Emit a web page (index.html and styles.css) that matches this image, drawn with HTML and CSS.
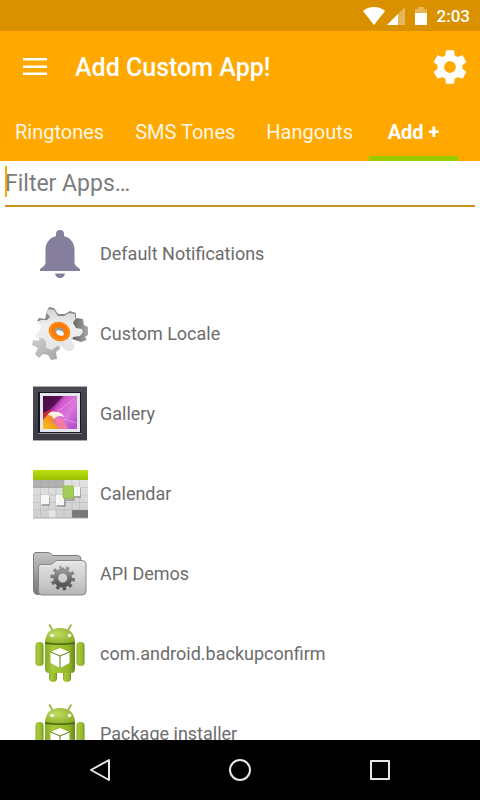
FILE: index.html
```html
<!DOCTYPE html>
<html lang="en">
<head>
    <meta charset="UTF-8">
    <meta name="viewport" content="width=device-width, initial-scale=1.0">
    <title>Add Custom App!</title>
    <link rel="stylesheet" href="styles.css">
</head>
<body>
    <div class="status-bar">
        <svg class="wifi" width="22" height="18" viewBox="0 0 22 18"><path fill="#fff" d="M11 18L0 4Q4.500 0 11 0T22 4Z"/></svg>
        <svg class="signal" width="18" height="18" viewBox="0 0 18 18"><path fill="#fff" opacity=".35" d="M18 0V18H0Z"/><path fill="#fff" d="M11 7V18H0Z"/></svg>
        <svg class="battery" width="12" height="18" viewBox="0 0 12 18"><path fill="#fff" opacity=".35" d="M3 0H9V2H12V6H0V2H3Z"/><path fill="#fff" d="M0 6H12V18H0Z"/></svg>
        <span class="clock">2:03</span>
    </div>
    <header class="toolbar">
        <button class="icon-button" aria-label="Menu">
            <svg width="32" height="32" viewBox="0 0 32 32"><path fill="#fff" d="M4 7H28V9.500H4ZM4 14.500H28V17H4ZM4 21.500H28V24H4Z"/></svg>
        </button>
        <h1>Add Custom App!</h1>
        <button class="icon-button" aria-label="Settings">
            <svg width="40" height="40" viewBox="0 0 24 24"><path fill="#fff" d="M19.430 12.980c.04-.32.07-.64.07-.98s-.03-.66-.07-.98l2.110-1.650c.19-.15.24-.42.12-.64l-2-3.460c-.12-.22-.39-.3-.61-.22l-2.490 1c-.52-.4-1.080-.73-1.690-.98l-.38-2.650C14.460 2.180 14.250 2 14 2h-4c-.25 0-.46.18-.49.42l-.38 2.650c-.61.25-1.170.59-1.690.98l-2.490-1c-.23-.09-.49 0-.61.22l-2 3.460c-.13.22-.07.49.12.64l2.110 1.650c-.04.32-.07.65-.07.98s.03.66.07.98l-2.110 1.650c-.19.15-.24.42-.12.64l2 3.460c.12.22.39.3.61.22l2.490-1c.52.4 1.080.73 1.690.98l.38 2.650c.03.24.24.42.49.42h4c.25 0 .46-.18.49-.42l.38-2.650c.61-.25 1.170-.59 1.690-.98l2.490 1c.23.09.49 0 .61-.22l2-3.460c.12-.22.07-.49-.12-.64l-2.110-1.650zM12 15.500c-1.930 0-3.500-1.570-3.500-3.500s1.570-3.500 3.500-3.500 3.500 1.570 3.500 3.500-1.570 3.500-3.500 3.500z"/></svg>
        </button>
    </header>
    <nav class="tabs">
        <a href="#ringtones">Ringtones</a>
        <a href="#sms">SMS Tones</a>
        <a href="#hangouts">Hangouts</a>
        <a href="#add" class="active">Add +</a>
    </nav>
    <main>
        <div class="filter">
            <input type="text" id="filter" placeholder="Filter Apps…" aria-label="Filter Apps">
        </div>
        <ul class="app-list">
            <li>
                <svg class="app-icon" viewBox="0 0 60 60">
                    <path fill="#857f9d" d="M26 12V10a4 4 0 0 1 8 0v2C41 14 44.500 19 44.500 26V39Q45 42 50 45V47H10V45Q15 42 15.500 39V26C15.500 19 19 14 26 12ZM25 49.500H35Q34 54 30 54T25 49.500Z"/>
                </svg>
                <span>Default Notifications</span>
            </li>
            <li>
                <svg class="app-icon" viewBox="0 0 60 60">
                    <defs>
                        <linearGradient id="steel" x1="0" y1="0" x2="0" y2="1"><stop offset="0" stop-color="#d2d2d2"/><stop offset=".4" stop-color="#efefef"/><stop offset="1" stop-color="#e4e4e4"/></linearGradient>
                        <linearGradient id="shade" x1="0" y1="0" x2="1" y2="1"><stop offset="0" stop-color="#d0d0d0"/><stop offset="1" stop-color="#a5a5a5"/></linearGradient>
                        <linearGradient id="dark" x1="0" y1="0" x2="1" y2="0"><stop offset="0" stop-color="#606060"/><stop offset="1" stop-color="#aaa"/></linearGradient>
                        <filter id="soft"><feGaussianBlur stdDeviation=".7"/></filter>
                    </defs>
                    <path fill="url(#dark)" filter="url(#soft)" d="M43 17L47 14L53 15L54 21L58 23V31L55 33L57 36L51 38L42 35Z"/>
                    <path fill="url(#shade)" d="M9 31L16 30L22 39L29 40L30 45L26 48L27 55L21 56L18 51L13 50L9 54L5 50L8 44L2 41L3 36L9 37Z"/>
                    <path fill="#888" d="M17 7L19 3L24 4L28 10L35 10L40 7L46 9V14L42 18H18L7 17L9 14L15 15Z"/>
                    <path fill="url(#steel)" d="M16 8L19 5L24 6L28 12L34 12L39 9L45 10L45 15L43 19L46 24L52 25L53 28L50 32L43 33L42 37L45 42L42 47L37 47L32 43L27 42L22 46L16 44L16 38L13 34L7 35L5 31L10 26L11 22L7 18L11 16L17 16L20 13Z"/>
                    <ellipse cx="29.500" cy="27.500" rx="11" ry="9.500" transform="rotate(24 29.500 27.500)" fill="#ff7b00"/>
                    <ellipse cx="29.500" cy="27" rx="9.500" ry="8" transform="rotate(24 29.500 27)" fill="none" stroke="#ff9422"/>
                    <ellipse cx="29.500" cy="27.500" rx="5" ry="4" transform="rotate(24 29.500 27.500)" fill="#999"/>
                    <ellipse cx="30" cy="29" rx="4" ry="2.500" transform="rotate(24 30 29)" fill="#f4f4f4"/>
                </svg>
                <span>Custom Locale</span>
            </li>
            <li>
                <svg class="app-icon" viewBox="0 0 60 60">
                    <defs>
                        <linearGradient id="photo" x1="0" y1=".1" x2="1" y2=".8"><stop offset="0" stop-color="#2c0630"/><stop offset=".24" stop-color="#7c1478"/><stop offset=".42" stop-color="#d259cc"/><stop offset=".7" stop-color="#dc78de"/><stop offset="1" stop-color="#b551cc"/></linearGradient>
                        <linearGradient id="flame" x1="0" y1="1" x2="1" y2="0"><stop offset="0" stop-color="#f5c80c"/><stop offset=".55" stop-color="#f28a32"/><stop offset="1" stop-color="#fff1dc"/></linearGradient>
                        <linearGradient id="frame" x1="0" y1="0" x2="0" y2="1"><stop offset="0" stop-color="#4b4a53"/><stop offset="1" stop-color="#3c3b45"/></linearGradient>
                    </defs>
                    <path fill="#aaa" d="M3 2H57V57H3Z"/>
                    <path fill="url(#frame)" d="M3 3H57V56H3Z"/>
                    <path fill="#17171d" d="M8 8H51V49H8Z"/>
                    <path fill="#92929a" d="M9 49H51L52 50H8Z"/>
                    <path fill="#e5e5ed" d="M10 9H50V48H10Z"/>
                    <path fill="url(#photo)" d="M13 12H47V45H13Z"/>
                    <path fill="#4d0b48" opacity=".8" d="M13 12H33L24 22L13 30Z"/>
                    <path fill="#c22a3a" d="M13 29L22 25L18 36L13 42Z"/>
                    <path fill="url(#flame)" d="M13 45V36L18 30Q25 25 32 31Q25 30 23 37L30 45Z"/>
                    <path fill="#fff0e6" d="M18 31Q20 26 26 28Q32 28 34 33Q28 30 24 35Q22 31 18 31Z"/>
                    <path fill="#f47ca2" d="M24 35Q28 31 33 36L38 45H30Z"/>
                    <path stroke="#efa5eb" opacity=".7" d="M27 28L45 14M34 35L46 39"/>
                </svg>
                <span>Gallery</span>
            </li>
            <li>
                <svg class="app-icon" viewBox="0 0 60 60">
                    <defs>
                        <linearGradient id="lime" x1="0" y1="0" x2="0" y2="1"><stop offset="0" stop-color="#bde00f"/><stop offset="1" stop-color="#98bf00"/></linearGradient>
                        <linearGradient id="paper" x1="0" y1="0" x2="0" y2="1"><stop offset="0" stop-color="#e2e2e2"/><stop offset="1" stop-color="#cfcfcf"/></linearGradient>
                    </defs>
                    <path fill="url(#paper)" d="M3 16H58V54H3Z"/>
                    <path fill="#b0b0b0" d="M3 16H34V24H3Z"/>
                    <path fill="#777" d="M42 46H58V54H42Z"/>
                    <path fill="#e5e5e5" d="M18 46H26V54H18Z"/>
                    <path fill="none" stroke="#999" stroke-opacity=".4" stroke-width=".7" d="M10.500 16V54M18.500 16V54M26 16V54M34 16V54M42 16V54M49.500 16V54M3 23.500H58M3 31H58M3 38.500H58M3 46H58"/>
                    <path fill="#888" opacity=".6" d="M12 33H20V42H12ZM27 34H36V43H27ZM36 24H51V34H45V37H36Z"/>
                    <path fill="#f6f6f6" d="M11 31H19V40H11ZM26 31H34V41H26ZM44 23H50V32H44Z"/>
                    <path fill="#a3ce55" stroke="#8ebb3f" stroke-width=".7" d="M33 22H43.500V34H33Z"/>
                    <path fill="url(#lime)" d="M3 7Q3 6 4 6H57Q58 6 58 7V16H3Z"/>
                    <path stroke="#aaa" d="M3 54H58"/>
                </svg>
                <span>Calendar</span>
            </li>
            <li>
                <svg class="app-icon" viewBox="0 0 60 60">
                    <defs>
                        <linearGradient id="folder" x1="0" y1="0" x2="0" y2="1"><stop offset="0" stop-color="#e5e5e5"/><stop offset=".6" stop-color="#ccc"/><stop offset="1" stop-color="#b5b5b5"/></linearGradient>
                        <linearGradient id="folderBack" x1="0" y1="0" x2="0" y2="1"><stop offset="0" stop-color="#c3c3c3"/><stop offset="1" stop-color="#777"/></linearGradient>
                        <linearGradient id="cog" x1="0" y1="0" x2="0" y2="1"><stop offset="0" stop-color="#939393"/><stop offset="1" stop-color="#555"/></linearGradient>
                    </defs>
                    <path fill="url(#folderBack)" stroke="#7c7c7c" d="M6 8.500H18Q20 8.500 23 11.500H47Q51 11.500 51 15V50.500H7Q3.500 50 3.500 46V11Q3.500 8.500 6 8.500Z"/>
                    <path fill="url(#folder)" stroke="#888" d="M11 20.500H20Q22 20.500 26 16.500H52Q56 16.500 56 20V47Q56 51 52 51H12Q8.500 51 8.500 47V23Q8.500 20.500 11 20.500Z"/>
                    <path stroke="#efefef" d="M26 18H52M11 22H20"/>
                    <g fill="none" stroke="url(#cog)">
                        <circle cx="32.700" cy="34" r="7" stroke-width="5"/>
                        <circle cx="32.700" cy="34" r="10.500" stroke-width="3.600" pathLength="100" stroke-dasharray="5 5"/>
                    </g>
                </svg>
                <span>API Demos</span>
            </li>
            <li>
                <svg class="app-icon" viewBox="0 0 60 60">
                    <defs>
                        <radialGradient id="head" cx=".4" cy=".4" r=".7"><stop offset="0" stop-color="#c4dc65"/><stop offset="1" stop-color="#86ac20"/></radialGradient>
                        <linearGradient id="body" x1="0" y1="0" x2="1" y2="0"><stop offset="0" stop-color="#84a925"/><stop offset=".25" stop-color="#a7ca3a"/><stop offset=".8" stop-color="#91b527"/><stop offset="1" stop-color="#67881b"/></linearGradient>
                        <symbol id="droid" viewBox="0 0 60 60" overflow="visible">
                            <path fill="none" stroke="#91ac35" stroke-width="1.500" stroke-linecap="round" d="M19.500 1L22.500 6M41 1L38 6"/>
                            <rect x="19" y="42" width="8" height="16" rx="4" fill="url(#body)"/>
                            <rect x="33" y="42" width="8" height="16" rx="4" fill="url(#body)"/>
                            <rect x="5.500" y="18" width="8" height="24" rx="3.500" fill="url(#body)"/>
                            <rect x="46.500" y="18" width="8" height="24" rx="3.500" fill="url(#body)"/>
                            <path fill="#4d6715" d="M15 18H45V22H15Z"/>
                            <path fill="url(#body)" d="M15 20Q30 22 45 20V45Q45 49 41 49H19Q15 49 15 45Z"/>
                            <path fill="url(#head)" d="M15 18Q16 4 30 4T45 18Q30 21 15 18Z"/>
                            <circle cx="22" cy="11.500" r="1.800" fill="#fff"/>
                            <circle cx="39.500" cy="11.500" r="1.800" fill="#fff"/>
                            <path fill="#fff" d="M30 24L39.500 28V39L30 44L20.500 39V28Z"/>
                            <path fill="none" stroke="#5f7c1d" d="M20.500 28L30 32L39.500 28M30 32V44"/>
                        </symbol>
                    </defs>
                    <use href="#droid" width="60" height="60"/>
                </svg>
                <span>com.android.backupconfirm</span>
            </li>
            <li>
                <svg class="app-icon" viewBox="0 0 60 60"><use href="#droid" width="60" height="60"/></svg>
                <span>Package installer</span>
            </li>
        </ul>
    </main>
    <footer class="nav-bar">
        <button aria-label="Back"><svg width="24" height="24" viewBox="0 0 24 24"><path d="M3 12L21 2V22Z"/></svg></button>
        <button aria-label="Home"><svg width="24" height="24" viewBox="0 0 24 24"><circle cx="12" cy="12" r="10"/></svg></button>
        <button aria-label="Recent apps"><svg width="24" height="24" viewBox="0 0 24 24"><path d="M3 3H21V21H3Z"/></svg></button>
    </footer>
</body>
</html>
```
FILE: styles.css
```css
* {
    box-sizing: border-box;
}
body {
    margin: 0;
    height: 100vh;
    display: flex;
    flex-direction: column;
    overflow: hidden;
    font-family: Roboto, sans-serif;
    background-color: #fff;
}
button {
    display: flex;
    align-items: center;
    justify-content: center;
    padding: 0;
    border: none;
    background: none;
    cursor: pointer;
}
.status-bar {
    display: flex;
    flex: none;
    align-items: center;
    justify-content: flex-end;
    height: 31px;
    padding-right: 10px;
    background-color: #d99100;
    color: #fff;
}
.signal {
    margin-left: 2px;
}
.battery {
    margin: 0 10px;
}
.clock {
    font-size: 17px;
    font-weight: 500;
}
.toolbar {
    display: flex;
    flex: none;
    align-items: center;
    height: 72px;
    padding: 0 10px 0 19px;
    background-color: #ffa900;
    color: #fff;
}
.toolbar h1 {
    flex: 1;
    margin: 0 0 0 24px;
    font-size: 25px;
    font-weight: 500;
}
.tabs {
    display: flex;
    flex: none;
    gap: 1px;
    height: 58px;
    background-color: #ffa900;
}
.tabs a {
    display: flex;
    align-items: center;
    justify-content: center;
    padding: 0 15px;
    font-size: 20px;
    color: #fff6e5;
    text-decoration: none;
}
.tabs .active {
    min-width: 89px;
    color: #fff;
    font-weight: bold;
    box-shadow: inset 0 -5px #99cc00;
}
main {
    flex: 1;
    min-height: 0;
    overflow: hidden;
}
.filter {
    position: relative;
    margin: 0 5px;
}
/* text cursor */
.filter::before {
    content: "";
    position: absolute;
    left: 0;
    top: 5px;
    width: 2px;
    height: 31px;
    background-color: #ffa900;
}
.filter input {
    display: block;
    width: 100%;
    height: 46px;
    padding: 0;
    border: none;
    border-bottom: 2px solid #ca9121;
    outline: none;
    background: none;
    font-family: inherit;
    font-size: 23px;
    color: #333;
}
.filter input::placeholder {
    color: #7c7c7c;
}
.app-list {
    margin: 0;
    padding: 7px 0 0;
    list-style: none;
}
.app-list li {
    display: flex;
    align-items: center;
    gap: 10px;
    height: 80px;
    padding-left: 30px;
    font-size: 18px;
    line-height: 20px;
    color: #6c6c6c;
}
.app-icon {
    flex: none;
    width: 60px;
    height: 60px;
}
.nav-bar {
    display: flex;
    flex: none;
    justify-content: center;
    gap: 80px;
    height: 60px;
    background-color: #000;
}
.nav-bar button {
    width: 60px;
}
.nav-bar svg {
    fill: none;
    stroke: #e6e6e6;
    stroke-width: 2;
    stroke-linejoin: round;
}
```
